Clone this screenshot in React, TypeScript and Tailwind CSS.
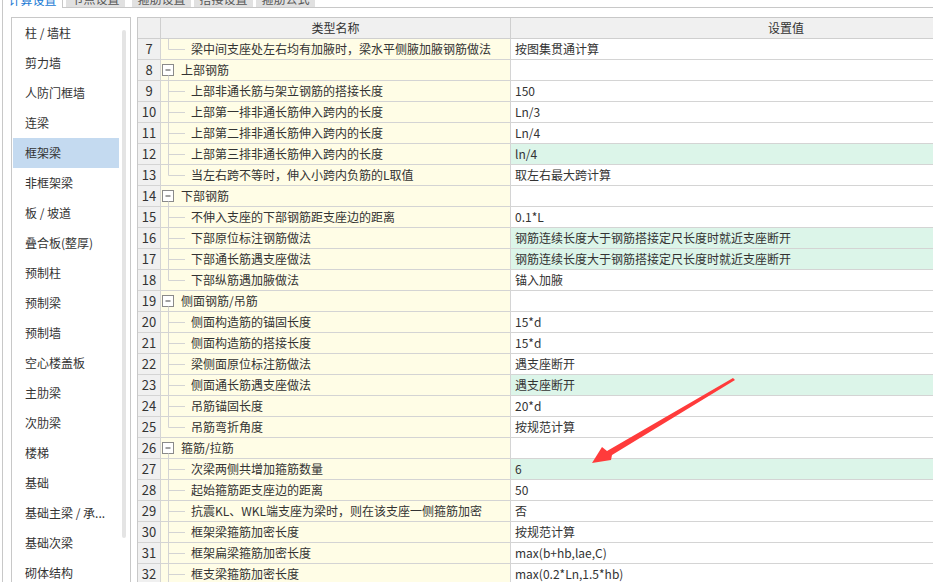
import React from "react";

type Row = {
  n: number;
  name: string;
  value?: string;
  group?: boolean;
  last?: boolean;
  green?: boolean;
};

const rows: Row[] = [
  { n: 7, name: "梁中间支座处左右均有加腋时，梁水平侧腋加腋钢筋做法", value: "按图集贯通计算", last: true },
  { n: 8, name: "上部钢筋", group: true },
  { n: 9, name: "上部非通长筋与架立钢筋的搭接长度", value: "150" },
  { n: 10, name: "上部第一排非通长筋伸入跨内的长度", value: "Ln/3" },
  { n: 11, name: "上部第二排非通长筋伸入跨内的长度", value: "Ln/4" },
  { n: 12, name: "上部第三排非通长筋伸入跨内的长度", value: "ln/4", green: true },
  { n: 13, name: "当左右跨不等时，伸入小跨内负筋的L取值", value: "取左右最大跨计算", last: true },
  { n: 14, name: "下部钢筋", group: true },
  { n: 15, name: "不伸入支座的下部钢筋距支座边的距离", value: "0.1*L" },
  { n: 16, name: "下部原位标注钢筋做法", value: "钢筋连续长度大于钢筋搭接定尺长度时就近支座断开", green: true },
  { n: 17, name: "下部通长筋遇支座做法", value: "钢筋连续长度大于钢筋搭接定尺长度时就近支座断开", green: true },
  { n: 18, name: "下部纵筋遇加腋做法", value: "锚入加腋", last: true },
  { n: 19, name: "侧面钢筋/吊筋", group: true },
  { n: 20, name: "侧面构造筋的锚固长度", value: "15*d" },
  { n: 21, name: "侧面构造筋的搭接长度", value: "15*d" },
  { n: 22, name: "梁侧面原位标注筋做法", value: "遇支座断开" },
  { n: 23, name: "侧面通长筋遇支座做法", value: "遇支座断开", green: true },
  { n: 24, name: "吊筋锚固长度", value: "20*d" },
  { n: 25, name: "吊筋弯折角度", value: "按规范计算", last: true },
  { n: 26, name: "箍筋/拉筋", group: true },
  { n: 27, name: "次梁两侧共增加箍筋数量", value: "6", green: true },
  { n: 28, name: "起始箍筋距支座边的距离", value: "50" },
  { n: 29, name: "抗震KL、WKL端支座为梁时，则在该支座一侧箍筋加密", value: "否" },
  { n: 30, name: "框架梁箍筋加密长度", value: "按规范计算" },
  { n: 31, name: "框架扁梁箍筋加密长度", value: "max(b+hb,lae,C)" },
  { n: 32, name: "框支梁箍筋加密长度", value: "max(0.2*Ln,1.5*hb)" },
];

const sideItems = [
  "柱 / 墙柱",
  "剪力墙",
  "人防门框墙",
  "连梁",
  "框架梁",
  "非框架梁",
  "板 / 坡道",
  "叠合板(整厚)",
  "预制柱",
  "预制梁",
  "预制墙",
  "空心楼盖板",
  "主肋梁",
  "次肋梁",
  "楼梯",
  "基础",
  "基础主梁 / 承...",
  "基础次梁",
  "砌体结构",
];

const tabs = ["节点设置", "箍筋设置", "搭接设置", "箍筋公式"];

function TreeMark({ row }: { row: Row }) {
  if (row.group) {
    return (
      <svg width="20" height="20" viewBox="0 0 20 20" className="shrink-0">
        <rect x="1.5" y="4.5" width="11" height="11" fill="#fff" stroke="#8a8a8a" />
        <line x1="4.5" y1="10" x2="9.5" y2="10" stroke="#444" />
        <line x1="7.5" y1="15.5" x2="7.5" y2="20" stroke="#d4d4d4" />
      </svg>
    );
  }
  return (
    <svg width="30" height="20" viewBox="0 0 30 20" className="shrink-0">
      <line x1="7.5" y1="0" x2="7.5" y2={row.last ? 10.5 : 20} stroke="#d4d4d4" />
      <line x1="7.5" y1="10.5" x2="24" y2="10.5" stroke="#d4d4d4" />
    </svg>
  );
}

export default function App() {
  return (
    <div
      className="relative h-[582px] w-[933px] overflow-hidden bg-white text-[12px] text-[#333]"
      style={{ fontFamily: '"Noto Sans CJK SC", "Noto Sans", sans-serif' }}
    >
      {/* Tabs strip (cut off at top) */}
      <div className="flex h-[8px] items-end">
        <div className="ml-[2px] flex h-full w-[61px] items-end justify-center overflow-hidden border-x border-[#c8c8c8] bg-white">
          <span className="mb-[1px] leading-[14px] text-[#1a7ad4]">计算设置</span>
        </div>
        <div className="flex h-full flex-1 items-end border-b border-[#c8c8c8]">
          {tabs.map((t, i) => (
            <div
              key={t}
              className={`flex h-[7px] w-[59px] items-end justify-center overflow-hidden bg-[#e1e1e1] ${
                i === 0 ? "ml-[3px]" : i === 1 ? "ml-[7px]" : "ml-[3px]"
              }`}
            >
              <span className="mb-[1px] leading-[14px] text-[#555]">{t}</span>
            </div>
          ))}
        </div>
      </div>

      {/* Content */}
      <div className="ml-[2px] flex h-[574px] border-l border-[#c8c8c8] pl-[8px] pt-[9px]">
        {/* Sidebar */}
        <div className="flex h-[600px] w-[120px] shrink-0 border border-[#c8c8c8]">
          <div className="flex w-[107px] flex-col">
            {sideItems.map((s, i) => (
              <div
                key={s}
                className={`ml-[1px] flex h-[30px] shrink-0 items-center pl-[12px] ${
                  i === 4 ? "bg-[#c4daf0]" : ""
                }`}
              >
                {s}
              </div>
            ))}
          </div>
          <div className="w-[11px]">
            <div className="ml-[3px] mt-[12px] h-[508px] w-[4px] rounded-full bg-[#e4e4e4]" />
          </div>
        </div>

        {/* Table */}
        <div className="ml-[6px] flex h-[600px] w-[820px] shrink-0 flex-col overflow-hidden border-l border-t border-[#c8c8c8]">
          <div className="flex h-[21px] shrink-0 border-b border-[#cfcfcf] bg-[#f0f0f0]">
            <div className="w-[23px] shrink-0 border-r border-[#cfcfcf]" />
            <div className="flex w-[350px] shrink-0 items-center justify-center border-r border-[#cfcfcf]">
              类型名称
            </div>
            <div className="flex w-[550px] shrink-0 items-center justify-center">设置值</div>
          </div>
          {rows.map((r) => (
            <div key={r.n} className="flex h-[21px] shrink-0 border-b border-[#d4d4d4]">
              <div className="flex w-[23px] shrink-0 items-center justify-center border-r border-[#d4d4d4] bg-[#f0f0f0] text-[13px]">
                {r.n}
              </div>
              <div className="flex w-[350px] shrink-0 items-center overflow-hidden whitespace-nowrap border-r border-[#d4d4d4] bg-[#fffde6]">
                <TreeMark row={r} />
                <span>{r.name}</span>
              </div>
              <div
                className={`flex w-[550px] shrink-0 items-center whitespace-nowrap pl-[4px] ${
                  r.green ? "bg-[#dcf5e9]" : "bg-white"
                }`}
              >
                {r.value}
              </div>
            </div>
          ))}
        </div>
      </div>

      {/* Annotation arrow */}
      <svg className="pointer-events-none absolute left-0 top-0" width="933" height="582" viewBox="0 0 933 582">
        <polygon
          points="733,378 735,380 612,455 611,460 592,463 602,447 607,451"
          fill="#ff3b3b"
        />
      </svg>
    </div>
  );
}
